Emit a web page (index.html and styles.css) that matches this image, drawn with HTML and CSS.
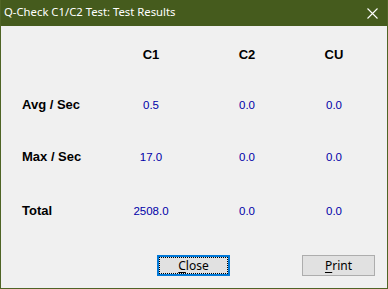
FILE: index.html
```html
<!DOCTYPE html>
<html>
<head>
<meta charset="utf-8">
<link rel="stylesheet" href="styles.css">
</head>
<body>
<div class="window">
  <div class="titlebar">
    <span class="title">Q-Check C1/C2 Test: Test Results</span>
    <span class="close-x">
      <svg width="11" height="11" viewBox="0 0 11 11"><path d="M0.5 0.5 L10.5 10.5 M10.5 0.5 L0.5 10.5" stroke="#ffffff" stroke-width="1.1" fill="none"/></svg>
    </span>
  </div>
  <div class="client">
    <div class="results">
      <div class="cell"></div>
      <div class="cell head">C1</div>
      <div class="cell head">C2</div>
      <div class="cell head">CU</div>

      <div class="cell label">Avg / Sec</div>
      <div class="cell value">0.5</div>
      <div class="cell value">0.0</div>
      <div class="cell value">0.0</div>

      <div class="cell label">Max / Sec</div>
      <div class="cell value">17.0</div>
      <div class="cell value">0.0</div>
      <div class="cell value">0.0</div>

      <div class="cell label">Total</div>
      <div class="cell value">2508.0</div>
      <div class="cell value">0.0</div>
      <div class="cell value">0.0</div>
    </div>
    <div class="buttons">
      <button class="btn default"><u>C</u>lose</button>
      <button class="btn"><u>P</u>rint</button>
    </div>
  </div>
</div>
</body>
</html>
```

FILE: styles.css
```css
html, body {
  margin: 0;
  padding: 0;
  background: #f0f0f0;
}
.window {
  width: 388px;
  height: 289px;
  box-sizing: border-box;
  border: 1px solid #4f6425;
  border-top: none;
  background: #455b1d;
  display: flex;
  flex-direction: column;
}
.titlebar {
  height: 26px;
  display: flex;
  align-items: flex-start;
  justify-content: space-between;
  padding: 3px 0 0 3px;
  box-sizing: border-box;
}
.title {
  font-family: "Noto Sans", sans-serif;
  font-size: 11.3px;
  line-height: 16px;
  color: #ffffff;
  padding-top: 1px;
}
.close-x {
  display: block;
  margin: 5px 9px 0 0;
  width: 11px;
  height: 11px;
}
.close-x svg {
  display: block;
}
.client {
  flex: 1;
  background: #f0f0f0;
  padding: 21px 0 0 21px;
  box-sizing: border-box;
}
.results {
  display: grid;
  grid-template-columns: 92px 74px 118px 56px;
  grid-template-rows: 50px 52px 54px 16px;
  align-items: baseline;
}
.cell {
  line-height: 16px;
  white-space: nowrap;
}
.head, .label {
  font-family: "Liberation Sans", Arial, sans-serif;
  font-weight: bold;
  font-size: 13px;
  color: #000000;
}
.head {
  text-align: center;
}
.value {
  font-family: "Liberation Sans", Arial, sans-serif;
  font-size: 11.5px;
  color: #0000a8;
  text-align: center;
}
.buttons {
  display: flex;
  gap: 72px;
  margin-top: 36px;
  padding-left: 135px;
}
.btn {
  width: 73px;
  height: 21px;
  box-sizing: border-box;
  margin: 0;
  padding: 0;
  background: #e1e1e1;
  border: 1px solid #adadad;
  font-family: "Noto Sans", sans-serif;
  font-size: 12px;
  line-height: 16px;
  color: #000000;
}
.btn u {
  text-decoration: underline;
  text-underline-offset: 2px;
}
.btn.default {
  border: 2px solid #0078d7;
  outline: 1px dotted #000000;
  outline-offset: -3px;
}
```
